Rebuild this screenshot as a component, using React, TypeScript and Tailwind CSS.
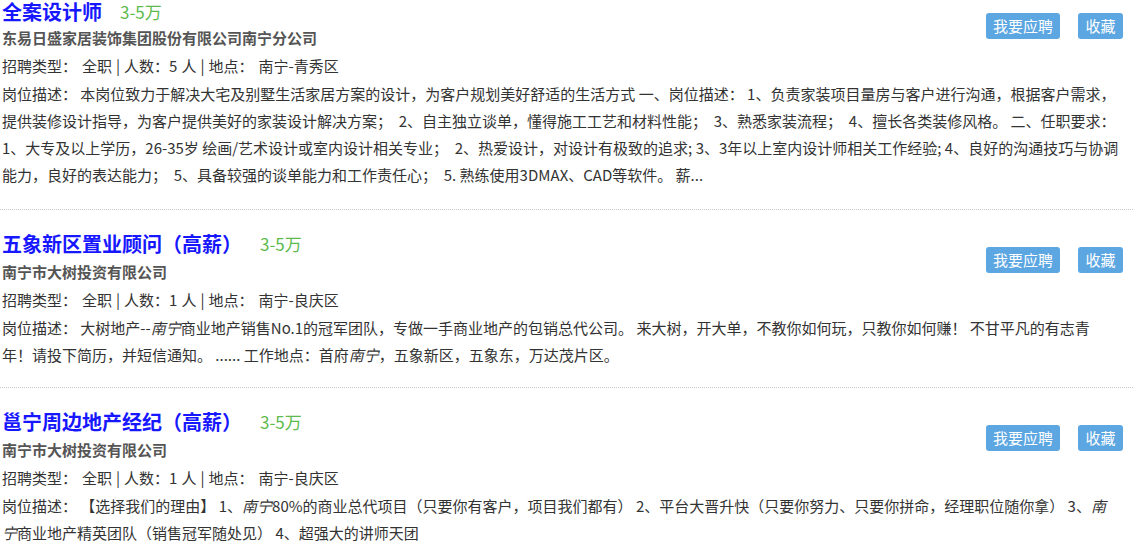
import React from 'react';

interface Job {
  title: string;
  salary: string;
  company: string;
  count: string;
  place: string;
  lines: React.ReactNode[];
}

const Em = ({ children }: { children: React.ReactNode }) => <i className="italic">{children}</i>;

const jobs: Job[] = [
  {
    title: '全案设计师',
    salary: '3-5万',
    company: '东易日盛家居装饰集团股份有限公司南宁分公司',
    count: '5',
    place: '南宁-青秀区',
    lines: [
      <>岗位描述： 本岗位致力于解决大宅及别墅生活家居方案的设计，为客户规划美好舒适的生活方式 一、岗位描述： 1、负责家装项目量房与客户进行沟通，根据客户需求，</>,
      <>提供装修设计指导，为客户提供美好的家装设计解决方案；&nbsp; 2、自主独立谈单，懂得施工工艺和材料性能；&nbsp; 3、熟悉家装流程；&nbsp; 4、擅长各类装修风格。 二、任职要求：</>,
      <>1、大专及以上学历，26-35岁 绘画/艺术设计或室内设计相关专业；&nbsp; 2、热爱设计，对设计有极致的追求; 3、3年以上室内设计师相关工作经验; 4、良好的沟通技巧与协调</>,
      <>能力，良好的表达能力；&nbsp; 5、具备较强的谈单能力和工作责任心；&nbsp; 5. 熟练使用3DMAX、CAD等软件。 薪...</>,
    ],
  },
  {
    title: '五象新区置业顾问（高薪）',
    salary: '3-5万',
    company: '南宁市大树投资有限公司',
    count: '1',
    place: '南宁-良庆区',
    lines: [
      <>岗位描述： 大树地产--<Em>南宁</Em>商业地产销售No.1的冠军团队，专做一手商业地产的包销总代公司。 来大树，开大单，不教你如何玩，只教你如何赚！ 不甘平凡的有志青</>,
      <>年！请投下简历，并短信通知。 ...... 工作地点：首府<Em>南宁</Em>，五象新区，五象东，万达茂片区。</>,
    ],
  },
  {
    title: '邕宁周边地产经纪（高薪）',
    salary: '3-5万',
    company: '南宁市大树投资有限公司',
    count: '1',
    place: '南宁-良庆区',
    lines: [
      <>岗位描述： 【选择我们的理由】 1、<Em>南宁</Em>80%的商业总代项目（只要你有客户，项目我们都有） 2、平台大晋升快（只要你努力、只要你拼命，经理职位随你拿） 3、<Em>南</Em></>,
      <><Em>宁</Em>商业地产精英团队（销售冠军随处见） 4、超强大的讲师天团</>,
    ],
  },
];

function JobItem({ job, first }: { job: Job; first: boolean }) {
  return (
    <div className={first ? 'relative pl-[2px] pr-[10px] pb-[21px]' : 'relative pl-[2px] pr-[10px] pt-[20px] pb-[19px] border-t border-dotted border-[#c8c8c8]'}>
      {/* Buttons */}
      <div className={first ? 'float-right flex gap-[18px] mt-[13px]' : 'float-right flex gap-[18px] mt-[17px]'}>
        <button className="h-[26px] px-[7px] rounded-[3px] bg-[#5ca6e2] text-white text-[15px] leading-[26px]">我要应聘</button>
        <button className="h-[26px] px-[7.5px] rounded-[3px] bg-[#5ca6e2] text-white text-[15px] leading-[26px]">收藏</button>
      </div>

      <div className={first ? 'flex items-center h-[24px] leading-[24px]' : 'flex items-center h-[28px] leading-[28px]'}>
        <span className="text-[20px] font-bold text-[#1717ff]">{job.title}</span>
        <span className="ml-[18px] text-[17px] text-[#5cbb4c]">{job.salary}</span>
      </div>
      <p className="text-[15px] leading-[28px] font-bold text-[#555]">{job.company}</p>
      <p className="text-[15px] leading-[28px] text-[#333] whitespace-nowrap">
        招聘类型：<span className="ml-[5px]">全职</span>
        <span className="mx-[4px]">|</span>人数：{job.count}
        <span className="ml-[4px]">人</span>
        <span className="mx-[4px]">|</span>地点：<span className="ml-[5px]">{job.place}</span>
      </p>
      <div className="text-[15px] leading-[27px] text-[#333]">
        {job.lines.map((l, i) => (
          <p key={i} className="whitespace-nowrap">{l}</p>
        ))}
      </div>
    </div>
  );
}

export default function App() {
  return (
    <div className="w-[1133px] h-[550px] overflow-hidden bg-white" style={{ fontFamily: '"Noto Sans CJK SC", "Noto Sans", sans-serif' }}>
      {jobs.map((j, i) => (
        <JobItem key={i} job={j} first={i === 0} />
      ))}
    </div>
  );
}
